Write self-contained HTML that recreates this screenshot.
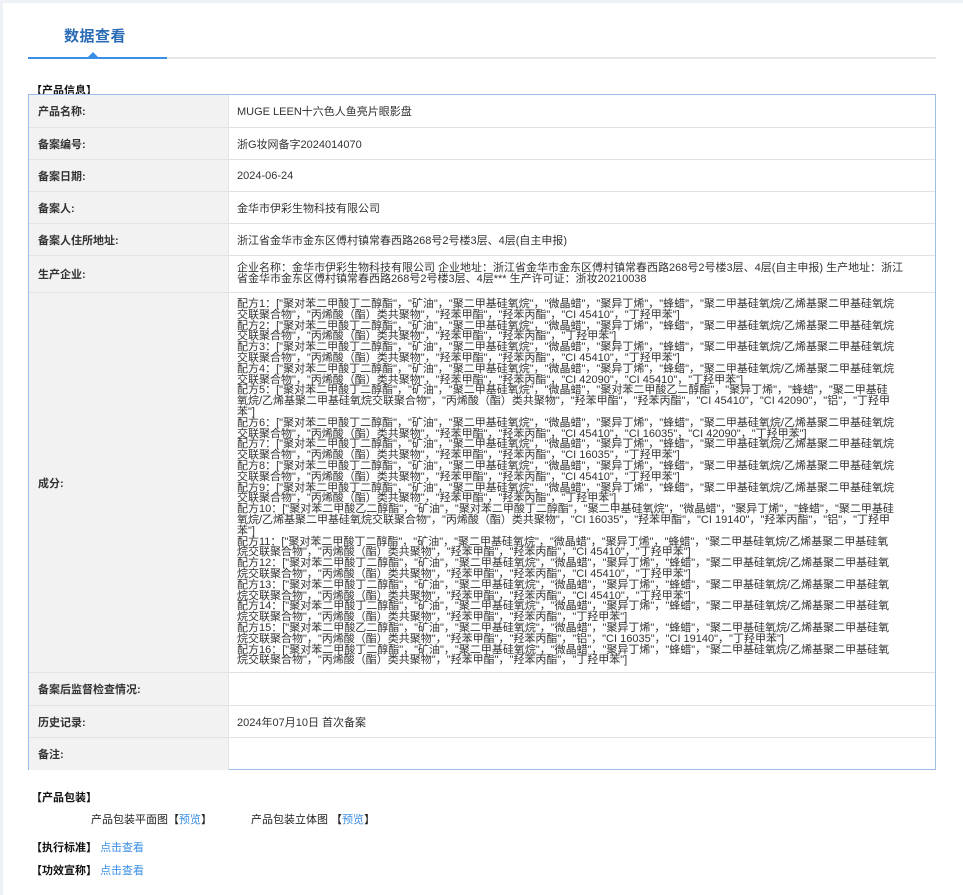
<!DOCTYPE html>
<html><head><meta charset="utf-8"><style>
*{margin:0;padding:0;box-sizing:border-box}
body{width:963px;height:895px;background:#eef1f5;font-family:"Liberation Sans","Noto Sans CJK SC",sans-serif;color:#333;overflow:hidden}
.page{position:absolute;left:3px;top:3px;width:960px;height:892px;background:#fff}
.tab{position:absolute;left:61px;top:22px;font-size:15px;color:#2a6bb5;font-weight:bold;letter-spacing:0.5px}
.line{position:absolute;left:25px;top:54px;width:908px;height:2px;background:#e6e6e6}
.line b{position:absolute;left:0;top:0;width:139px;height:2px;background:#3a8ee6}
.tri{position:absolute;left:85px;top:49px;width:0;height:0;border-left:5px solid transparent;border-right:5px solid transparent;border-bottom:5px solid #3a8ee6}
.h{position:absolute;font-size:11px;font-weight:bold;color:#111}
.tbl{position:absolute;left:25px;top:91px;width:908px;height:676px;border:1px solid #9cbde6;background:#fff}
.row{position:absolute;left:0;width:906px;border-bottom:1px solid #e3e3e3}
.lab{position:absolute;left:0;top:0;bottom:0;width:200px;background:#f2f2f2;border-right:1px solid #e3e3e3;font-size:11px;font-weight:bold;color:#333;padding-left:9px;display:flex;align-items:center}
.val{position:absolute;left:200px;top:0;bottom:0;right:0;font-size:11px;color:#333;padding-left:8px;display:flex;align-items:center}
.ing{position:absolute;left:208px;top:6px;font-size:11px;line-height:10.8px;white-space:nowrap;color:#333}
.lnk{color:#3a8ee6}
.s{position:absolute;font-size:11px;color:#222}
</style></head><body><div class="page">
<div class="tab">数据查看</div>
<div class="line"><b></b></div><div class="tri"></div>
<div class="h" style="left:28px;top:79px">【产品信息】</div>
<div class="tbl">
<div class="row" style="top:0;height:33px"><div class="lab">产品名称:</div><div class="val">MUGE LEEN十六色人鱼亮片眼影盘</div></div>
<div class="row" style="top:33px;height:32px"><div class="lab">备案编号:</div><div class="val">浙G妆网备字2024014070</div></div>
<div class="row" style="top:65px;height:32px"><div class="lab">备案日期:</div><div class="val">2024-06-24</div></div>
<div class="row" style="top:97px;height:32px"><div class="lab">备案人:</div><div class="val">金华市伊彩生物科技有限公司</div></div>
<div class="row" style="top:129px;height:32px"><div class="lab">备案人住所地址:</div><div class="val">浙江省金华市金东区傅村镇常春西路268号2号楼3层、4层(自主申报)</div></div>
<div class="row" style="top:161px;height:37px"><div class="lab">生产企业:</div><div class="val" style="line-height:11px">企业名称：金华市伊彩生物科技有限公司 企业地址：浙江省金华市金东区傅村镇常春西路268号2号楼3层、4层(自主申报) 生产地址：浙江<br>省金华市金东区傅村镇常春西路268号2号楼3层、4层*** 生产许可证：浙妆20210038</div></div>
<div class="row" style="top:198px;height:380px"><div class="lab">成分:</div><div class="ing">
配方1：["聚对苯二甲酸丁二醇酯"，"矿油"，"聚二甲基硅氧烷"，"微晶蜡"，"聚异丁烯"，"蜂蜡"，"聚二甲基硅氧烷/乙烯基聚二甲基硅氧烷<br>交联聚合物"，"丙烯酸（酯）类共聚物"，"羟苯甲酯"，"羟苯丙酯"，"CI 45410"，"丁羟甲苯"]<br>
配方2：["聚对苯二甲酸丁二醇酯"，"矿油"，"聚二甲基硅氧烷"，"微晶蜡"，"聚异丁烯"，"蜂蜡"，"聚二甲基硅氧烷/乙烯基聚二甲基硅氧烷<br>交联聚合物"，"丙烯酸（酯）类共聚物"，"羟苯甲酯"，"羟苯丙酯"，"丁羟甲苯"]<br>
配方3：["聚对苯二甲酸丁二醇酯"，"矿油"，"聚二甲基硅氧烷"，"微晶蜡"，"聚异丁烯"，"蜂蜡"，"聚二甲基硅氧烷/乙烯基聚二甲基硅氧烷<br>交联聚合物"，"丙烯酸（酯）类共聚物"，"羟苯甲酯"，"羟苯丙酯"，"CI 45410"，"丁羟甲苯"]<br>
配方4：["聚对苯二甲酸丁二醇酯"，"矿油"，"聚二甲基硅氧烷"，"微晶蜡"，"聚异丁烯"，"蜂蜡"，"聚二甲基硅氧烷/乙烯基聚二甲基硅氧烷<br>交联聚合物"，"丙烯酸（酯）类共聚物"，"羟苯甲酯"，"羟苯丙酯"，"CI 42090"，"CI 45410"，"丁羟甲苯"]<br>
配方5：["聚对苯二甲酸丁二醇酯"，"矿油"，"聚二甲基硅氧烷"，"微晶蜡"，"聚对苯二甲酸乙二醇酯"，"聚异丁烯"，"蜂蜡"，"聚二甲基硅<br>氧烷/乙烯基聚二甲基硅氧烷交联聚合物"，"丙烯酸（酯）类共聚物"，"羟苯甲酯"，"羟苯丙酯"，"CI 45410"，"CI 42090"，"铝"，"丁羟甲<br>苯"]<br>
配方6：["聚对苯二甲酸丁二醇酯"，"矿油"，"聚二甲基硅氧烷"，"微晶蜡"，"聚异丁烯"，"蜂蜡"，"聚二甲基硅氧烷/乙烯基聚二甲基硅氧烷<br>交联聚合物"，"丙烯酸（酯）类共聚物"，"羟苯甲酯"，"羟苯丙酯"，"CI 45410"，"CI 16035"，"CI 42090"，"丁羟甲苯"]<br>
配方7：["聚对苯二甲酸丁二醇酯"，"矿油"，"聚二甲基硅氧烷"，"微晶蜡"，"聚异丁烯"，"蜂蜡"，"聚二甲基硅氧烷/乙烯基聚二甲基硅氧烷<br>交联聚合物"，"丙烯酸（酯）类共聚物"，"羟苯甲酯"，"羟苯丙酯"，"CI 16035"，"丁羟甲苯"]<br>
配方8：["聚对苯二甲酸丁二醇酯"，"矿油"，"聚二甲基硅氧烷"，"微晶蜡"，"聚异丁烯"，"蜂蜡"，"聚二甲基硅氧烷/乙烯基聚二甲基硅氧烷<br>交联聚合物"，"丙烯酸（酯）类共聚物"，"羟苯甲酯"，"羟苯丙酯"，"CI 45410"，"丁羟甲苯"]<br>
配方9：["聚对苯二甲酸丁二醇酯"，"矿油"，"聚二甲基硅氧烷"，"微晶蜡"，"聚异丁烯"，"蜂蜡"，"聚二甲基硅氧烷/乙烯基聚二甲基硅氧烷<br>交联聚合物"，"丙烯酸（酯）类共聚物"，"羟苯甲酯"，"羟苯丙酯"，"丁羟甲苯"]<br>
配方10：["聚对苯二甲酸乙二醇酯"，"矿油"，"聚对苯二甲酸丁二醇酯"，"聚二甲基硅氧烷"，"微晶蜡"，"聚异丁烯"，"蜂蜡"，"聚二甲基硅<br>氧烷/乙烯基聚二甲基硅氧烷交联聚合物"，"丙烯酸（酯）类共聚物"，"CI 16035"，"羟苯甲酯"，"CI 19140"，"羟苯丙酯"，"铝"，"丁羟甲<br>苯"]<br>
配方11：["聚对苯二甲酸丁二醇酯"，"矿油"，"聚二甲基硅氧烷"，"微晶蜡"，"聚异丁烯"，"蜂蜡"，"聚二甲基硅氧烷/乙烯基聚二甲基硅氧<br>烷交联聚合物"，"丙烯酸（酯）类共聚物"，"羟苯甲酯"，"羟苯丙酯"，"CI 45410"，"丁羟甲苯"]<br>
配方12：["聚对苯二甲酸丁二醇酯"，"矿油"，"聚二甲基硅氧烷"，"微晶蜡"，"聚异丁烯"，"蜂蜡"，"聚二甲基硅氧烷/乙烯基聚二甲基硅氧<br>烷交联聚合物"，"丙烯酸（酯）类共聚物"，"羟苯甲酯"，"羟苯丙酯"，"CI 45410"，"丁羟甲苯"]<br>
配方13：["聚对苯二甲酸丁二醇酯"，"矿油"，"聚二甲基硅氧烷"，"微晶蜡"，"聚异丁烯"，"蜂蜡"，"聚二甲基硅氧烷/乙烯基聚二甲基硅氧<br>烷交联聚合物"，"丙烯酸（酯）类共聚物"，"羟苯甲酯"，"羟苯丙酯"，"CI 45410"，"丁羟甲苯"]<br>
配方14：["聚对苯二甲酸丁二醇酯"，"矿油"，"聚二甲基硅氧烷"，"微晶蜡"，"聚异丁烯"，"蜂蜡"，"聚二甲基硅氧烷/乙烯基聚二甲基硅氧<br>烷交联聚合物"，"丙烯酸（酯）类共聚物"，"羟苯甲酯"，"羟苯丙酯"，"丁羟甲苯"]<br>
配方15：["聚对苯二甲酸乙二醇酯"，"矿油"，"聚二甲基硅氧烷"，"微晶蜡"，"聚异丁烯"，"蜂蜡"，"聚二甲基硅氧烷/乙烯基聚二甲基硅氧<br>烷交联聚合物"，"丙烯酸（酯）类共聚物"，"羟苯甲酯"，"羟苯丙酯"，"铝"，"CI 16035"，"CI 19140"，"丁羟甲苯"]<br>
配方16：["聚对苯二甲酸丁二醇酯"，"矿油"，"聚二甲基硅氧烷"，"微晶蜡"，"聚异丁烯"，"蜂蜡"，"聚二甲基硅氧烷/乙烯基聚二甲基硅氧<br>烷交联聚合物"，"丙烯酸（酯）类共聚物"，"羟苯甲酯"，"羟苯丙酯"，"丁羟甲苯"]
</div></div>
<div class="row" style="top:578px;height:33px"><div class="lab">备案后监督检查情况:</div><div class="val"></div></div>
<div class="row" style="top:611px;height:32px"><div class="lab">历史记录:</div><div class="val">2024年07月10日 首次备案</div></div>
<div class="row" style="top:643px;height:32px;border-bottom:none"><div class="lab">备注:</div><div class="val"></div></div>
</div>
<div class="h" style="left:28px;top:786px">【产品包装】</div>
<div class="s" style="left:88px;top:808px">产品包装平面图【<span class="lnk">预览</span>】</div>
<div class="s" style="left:248px;top:808px">产品包装立体图 【<span class="lnk">预览</span>】</div>
<div class="h" style="left:28px;top:836px">【执行标准】 <span class="lnk" style="font-weight:normal">点击查看</span></div>
<div class="h" style="left:28px;top:859px">【功效宣称】 <span class="lnk" style="font-weight:normal">点击查看</span></div>
</div></body></html>
